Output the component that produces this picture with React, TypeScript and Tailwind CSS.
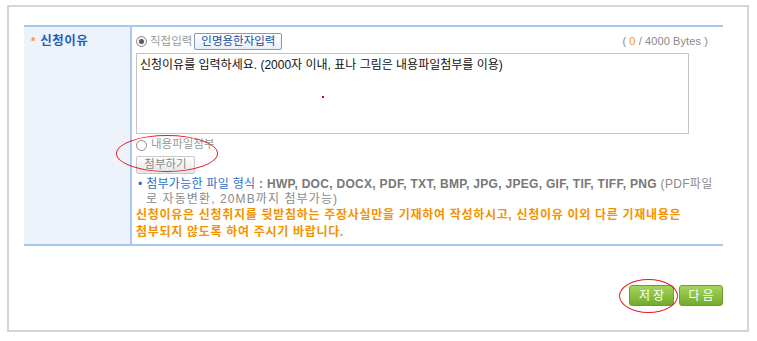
import React from "react";

const F = { fontFamily: '"Liberation Sans", "Noto Sans CJK KR", sans-serif' };

export default function App() {
  return (
    <div
      className="relative w-[757px] h-[341px] bg-white pt-[5px] pl-[7px] text-[12px] leading-none"
      style={F}
    >
      <div className="w-[742px] h-[327px] border-2 border-[#d5d5d5] pl-[15px] pt-[18px]">
        <div className="w-[699px] flex border-t-2 border-b-2 border-[#a9c8ee]">
          {/* label */}
          <div className="w-[108px] shrink-0 bg-[#eef3fb] border-r-2 border-[#a9c8ee] pl-[7px] pt-[8px]">
            <div className="flex items-center">
              <span className="text-[#f7941d] text-[11px] font-bold mr-[5px] mt-[1px]">*</span>
              <span className="text-[#1d5fb8] font-bold text-[12.5px] tracking-[0.5px]">신청이유</span>
            </div>
          </div>
          {/* content */}
          <div className="flex-1 min-w-0 pl-[4px] pt-[6px] pb-[3px] pr-[15px]">
            <div className="flex items-center h-[17px]">
              <span className="w-[11px] h-[11px] rounded-full border border-[#8a8a8a] bg-[#f4f4f4] flex items-center justify-center mr-[3px]">
                <span className="w-[5px] h-[5px] rounded-full bg-[#5a5a5a]" />
              </span>
              <span className="text-[#9a9a9a] text-[11.5px]">직접입력</span>
              <span className="ml-[2px] h-[17px] px-[6px] border border-[#7f9db9] rounded-[2px] bg-gradient-to-b from-white to-[#e8eef8] text-[#1b4e96] text-[11.5px] flex items-center">
                인명용한자입력
              </span>
              <span className="ml-auto text-[#888] text-[11px] tracking-[0.1px]">
                ( <span className="text-[#f39800]">0</span> / 4000 Bytes )
              </span>
            </div>
            <div className="mt-[3px] w-[553px] h-[81px] border border-[#c4c4c4] relative px-[3px] pt-[5px]">
              <span className="text-[#111] text-[12px]">
                신청이유를 입력하세요. (2000자 이내, 표나 그림은 내용파일첨부를 이용)
              </span>
              <span className="absolute left-[185px] top-[42px] w-[2px] h-[2px] bg-[#e00000]" />
            </div>
            <div className="flex items-center h-[14px] mt-[4px]">
              <span className="w-[11px] h-[11px] rounded-full border border-[#8a8a8a] bg-white mr-[4px]" />
              <span className="text-[#9a9a9a] text-[11.5px]">내용파일첨부</span>
            </div>
            <div className="mt-[4px] w-[59px] h-[18px] border border-[#c8c8c8] rounded-[2px] bg-gradient-to-b from-white to-[#e6e6e6] text-[#8a8a8a] text-[11.5px] flex items-center justify-center">
              첨부하기
            </div>
            <div className="mt-[3px] text-[12px] leading-[15px] pl-[2px] tracking-[0.3px] whitespace-nowrap">
              <span className="text-[#2d6fc6]">• 첨부가능한 파일 형식</span>
              <span className="text-[#777] font-bold"> : HWP, DOC, DOCX, PDF, TXT, BMP, JPG, JPEG, GIF, TIF, TIFF, PNG </span>
              <span className="text-[#8a8a8a]">(PDF파일</span>
              <br />
              <span className="text-[#8a8a8a] pl-[8px] tracking-[1.1px]">로 자동변환, 20MB까지 첨부가능)</span>
            </div>
            <div className="mt-0 text-[#f39200] font-bold text-[12px] leading-[17px] tracking-[0.7px] whitespace-nowrap">
              신청이유은 신청취지를 뒷받침하는 주장사실만을 기재하여 작성하시고, 신청이유 이외 다른 기재내용은
              <br />
              첨부되지 않도록 하여 주시기 바랍니다.
            </div>
          </div>
        </div>
        <div className="w-[699px] flex justify-end gap-[5px] mt-[39px]">
          <span className="w-[45px] h-[21px] rounded-[3px] border border-[#6e9e2c] bg-gradient-to-b from-[#a5d45a] to-[#72ab2c] text-white text-[12px] flex items-center justify-center tracking-[3px] pl-[3px]">
            저장
          </span>
          <span className="w-[44px] h-[21px] rounded-[3px] border border-[#6e9e2c] bg-gradient-to-b from-[#a5d45a] to-[#72ab2c] text-white text-[12px] flex items-center justify-center tracking-[3px] pl-[3px]">
            다음
          </span>
        </div>
      </div>
      {/* red ellipses */}
      <span className="absolute left-[116px] top-[135px] w-[102px] h-[37px] rounded-[50%] border border-[#e01e1e]" />
      <span className="absolute left-[619px] top-[279px] w-[59px] h-[34px] rounded-[50%] border border-[#e01e1e]" />
    </div>
  );
}
